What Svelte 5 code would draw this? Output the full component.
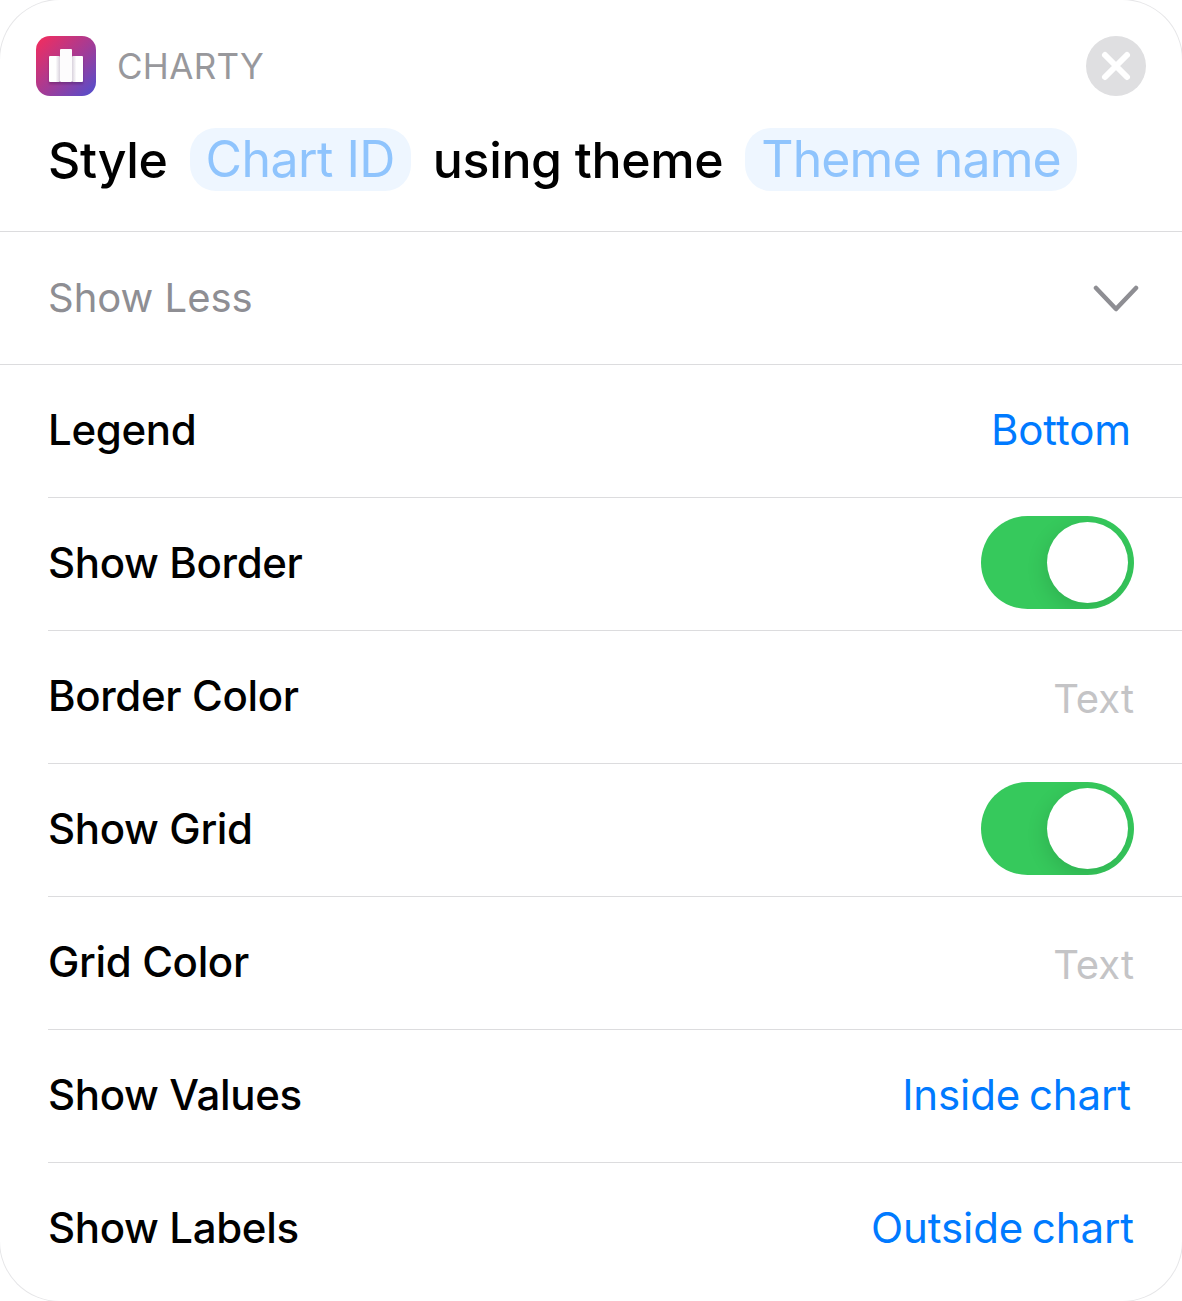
<div class="card">
  <header class="head">
    <div class="brand">
      <svg class="logo" width="60" height="60" viewBox="0 0 60 60">
        <defs>
          <linearGradient id="lg" x1="0" y1="0" x2="1" y2="1">
            <stop offset="0" stop-color="#f72c5b" />
            <stop offset="0.55" stop-color="#a03c98" />
            <stop offset="1" stop-color="#4f4fd0" />
          </linearGradient>
          <linearGradient id="barL" x1="0" y1="0" x2="1" y2="0">
            <stop offset="0" stop-color="#fff" />
            <stop offset="0.6" stop-color="#fff" />
            <stop offset="1" stop-color="#d9d2dd" />
          </linearGradient>
          <linearGradient id="barR" x1="0" y1="0" x2="1" y2="0">
            <stop offset="0" stop-color="#d9d2dd" />
            <stop offset="0.4" stop-color="#fff" />
            <stop offset="1" stop-color="#fff" />
          </linearGradient>
          <filter id="soft" x="-20%" y="-20%" width="140%" height="140%">
            <feGaussianBlur stdDeviation="1.2" />
          </filter>
        </defs>
        <rect width="60" height="60" rx="14" fill="url(#lg)" />
        <rect x="13" y="22" width="34" height="26" fill="#301040" opacity="0.3" filter="url(#soft)" />
        <rect x="13" y="20" width="11" height="26" rx="1" fill="url(#barL)" />
        <rect x="36" y="20" width="11" height="26" rx="1" fill="url(#barR)" />
        <rect x="24" y="13" width="12" height="33" rx="1" fill="#fdfcfd" />
      </svg>
      <span class="name">CHARTY</span>
      <button class="close" aria-label="Close">
        <svg width="60" height="60" viewBox="0 0 60 60">
          <path d="M19 19L41 41M41 19L19 41" stroke="#fff" stroke-width="6" stroke-linecap="round" />
        </svg>
      </button>
    </div>
    <div class="title">
      <span class="word">Style</span>
      <span class="pill">Chart ID</span>
      <span class="word">using theme</span>
      <span class="pill tight">Theme name</span>
    </div>
  </header>

  <div class="less">
    <span>Show Less</span>
    <svg width="46" height="32" viewBox="0 0 46 32">
      <path d="M3 7L23 28L43 7" fill="none" stroke="#8e8e93" stroke-width="4.5" stroke-linecap="round" stroke-linejoin="round" />
    </svg>
  </div>

  {#each rows as row, i}
    <div class="row" class:last={i === rows.length - 1}>
      <span class="label">{row.label}</span>
      {#if row.kind === 'toggle'}
        <span class="toggle"><span class="knob"></span></span>
      {:else if row.kind === 'text'}
        <span class="ph">{row.value}</span>
      {:else}
        <span class="val" style={`margin-right: ${row.mr}px`}>{row.value}</span>
      {/if}
    </div>
  {/each}
</div>

<script>
  const rows = [
    { label: 'Legend', kind: 'value', value: 'Bottom', mr: 3 },
    { label: 'Show Border', kind: 'toggle' },
    { label: 'Border Color', kind: 'text', value: 'Text' },
    { label: 'Show Grid', kind: 'toggle' },
    { label: 'Grid Color', kind: 'text', value: 'Text' },
    { label: 'Show Values', kind: 'value', value: 'Inside chart', mr: 3 },
    { label: 'Show Labels', kind: 'value', value: 'Outside chart', mr: 0 }
  ];
</script>

<style>
  :global(body) {
    margin: 0;
    background: #fff;
  }
  .card {
    box-sizing: border-box;
    width: 1182px;
    height: 1301px;
    background: #fff;
    box-shadow: 0 0 0 1px #e6e6e8;
    border-radius: 60px;
    font-family: Inter, "Liberation Sans", sans-serif;
    color: #000;
    overflow: hidden;
  }
  .head {
    box-sizing: border-box;
    height: 232px;
    border-bottom: 1px solid #dcdcde;
    padding: 36px 36px 0;
  }
  .brand {
    display: flex;
    align-items: center;
    height: 60px;
  }
  .logo {
    flex: none;
  }
  .name {
    margin-left: 21px;
    font-size: 35px;
    letter-spacing: 0.3px;
    color: #98989c;
    flex: 1;
  }
  .close {
    width: 60px;
    height: 60px;
    padding: 0;
    border: 0;
    border-radius: 50%;
    background: #dfdfe1;
    display: block;
  }
  .close svg {
    display: block;
  }
  .title {
    display: flex;
    align-items: center;
    gap: 22px;
    margin: 32px 0 0 12px;
    height: 63px;
    font-size: 50px;
    white-space: nowrap;
  }
  .word {
    font-weight: 450;
    letter-spacing: -0.35px;
  }
  .pill {
    padding: 0 16px;
    height: 63px;
    line-height: 63px;
    border-radius: 26px;
    background: #eef6ff;
    color: #8fc4fd;
    letter-spacing: -0.55px;
  }
  .pill.tight {
    letter-spacing: -0.9px;
  }
  .less,
  .row {
    display: flex;
    align-items: center;
    justify-content: space-between;
    box-sizing: border-box;
    height: 133px;
    font-size: 42px;
  }
  .less {
    padding: 0 43px 2px 48px;
    border-bottom: 1px solid #dcdcde;
    color: #8e8e93;
    font-size: 40px;
  }
  .row {
    margin-left: 48px;
    padding: 0 48px 4px 0;
    border-bottom: 1px solid #dcdcde;
  }
  .row.last {
    border-bottom: 0;
    height: 138px;
    padding-bottom: 9px;
  }
  .label {
    font-weight: 450;
    letter-spacing: -0.35px;
  }
  .val {
    color: #007aff;
    letter-spacing: -0.1px;
    word-spacing: -3px;
  }
  .ph {
    color: #c4c4c6;
    font-size: 40px;
    margin-top: 6px;
  }
  .toggle {
    position: relative;
    display: block;
    width: 153px;
    height: 93px;
    border-radius: 47px;
    background: #36c95c;
    overflow: hidden;
  }
  .knob {
    position: absolute;
    top: 6px;
    right: 6px;
    width: 81px;
    height: 81px;
    border-radius: 50%;
    background: #fff;
    box-shadow: -2px 6px 20px rgba(0, 0, 0, 0.12);
  }
</style>
